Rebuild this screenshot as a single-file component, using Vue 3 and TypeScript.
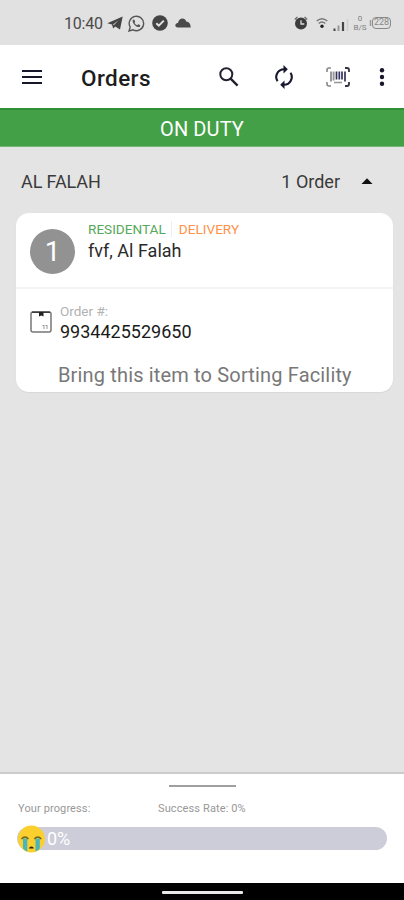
<script setup lang="ts">
interface Order {
  position: number
  kind: string
  task: string
  place: string
  code: string
  note: string
}

const orders: Order[] = [
  {
    position: 1,
    kind: 'RESIDENTAL',
    task: 'DELIVERY',
    place: 'fvf, Al Falah',
    code: '9934425529650',
    note: 'Bring this item to Sorting Facility',
  },
]
</script>

<template>
  <div class="screen">
    <div class="status">
      <span class="clock">10:40</span>
      <svg class="tele" width="16" height="14" viewBox="0 0 16 14">
        <path d="M0.3 7.2 15.7 0.4 13 13.6 8.3 10.4 6.2 12.6 5 8.6Z" fill="#444" />
        <path d="M5.8 8.400 11.500 4.300 7 9.300" fill="#bbb" />
      </svg>
      <svg class="whats" width="17" height="17" viewBox="0 0 17 17">
        <path d="M1 16 2.2 12.1A7.2 7.2 0 1 1 5 14.8Z" fill="none" stroke="#555" stroke-width="1.4" />
        <path d="M5.2 4.5c-1.5 1.5.2 4.300 2 5.900s4 2.300 5.100.8l-.3-1.200-1.900-.7-.9 1c-1.300-.5-2.200-1.500-2.700-2.500l.7-.9-.7-2Z" fill="#555" />
      </svg>
      <svg class="check" width="16" height="16" viewBox="0 0 16 16">
        <circle cx="8" cy="8" r="7.8" fill="#444" />
        <path d="m4.300 8.200 2.500 2.400 5-5" fill="none" stroke="#e2e2e2" stroke-width="2" />
      </svg>
      <svg class="cloud" width="16" height="10" viewBox="0 0 16 10">
        <path d="M3 9.500C.8 9.500 0 8 .4 6.800.8 5.500 2 5 3 5 3.500 2 5.300.5 7.400.5c2.200 0 3.500 1.300 4 3.300 2.300 0 4.100 1.500 4.300 5.700Z" fill="#4a4a4a" />
      </svg>
      <div class="system">
        <svg width="14" height="14" viewBox="0 0 14 14">
          <circle cx="7" cy="7.500" r="6" fill="#3d3d3d" />
          <path d="M.8 3.500 3.500.9M13.200 3.500 10.500.9" stroke="#666" stroke-width="1.300" />
          <path d="M7 4.200V8h3.300" fill="none" stroke="#ddd" stroke-width="1.300" />
        </svg>
        <svg class="wifi" width="12" height="12" viewBox="0 0 12 12">
          <path d="M.7 4.100Q6-.6 11.300 4.100M2.700 6.500Q6 3.500 9.300 6.500" fill="none" stroke="#777" stroke-width="1.400" />
          <circle cx="6" cy="9.300" r="1.700" fill="#222" />
        </svg>
        <svg class="signal" width="16" height="12" viewBox="0 0 16 12">
          <path d="M1.500 9.500V12" stroke="#444" stroke-width="2" />
          <path d="M5.500 6.500V12" stroke="#999" stroke-width="2" />
          <path d="M10 3v9" stroke="#444" stroke-width="2.200" />
          <path d="M14.500 0v12" stroke="#cdcdcd" stroke-width="1.500" />
        </svg>
        <span class="rate"><span>0</span><span>B/S</span></span>
        <svg class="nub" width="3" height="6" viewBox="0 0 3 6"><path d="M1.500 0v6" stroke="#999" stroke-width="1.500" /></svg>
        <span class="battery">228</span>
      </div>
    </div>

    <header class="bar">
      <svg class="menu" width="20" height="14" viewBox="0 0 20 14">
        <path d="M0 1h20M0 7h20M0 13h20" stroke="#17172b" stroke-width="2" />
      </svg>
      <h1>Orders</h1>
      <svg class="search" width="20" height="20" viewBox="0 0 20 20" fill="none" stroke="#222230">
        <circle cx="7.300" cy="7.300" r="6" stroke-width="2" />
        <path d="m11.600 11.600 7 7" stroke-width="2.400" />
      </svg>
      <svg class="sync" width="20" height="24" viewBox="0 0 20 24">
        <path d="M10.500 4.200H10a7.800 7.800 0 0 0-6.500 12M9.500 19.800H10a7.800 7.800 0 0 0 6.500-12" fill="none" stroke="#17172f" stroke-width="2.100" />
        <path d="M9.500 0v8.400l4.300-4.200ZM10.500 24v-8.400l-4.300 4.200Z" fill="#17172f" />
      </svg>
      <svg class="scan" width="24" height="20" viewBox="0 0 24 20" fill="none">
        <path d="M5 1H3Q1 1 1 3v2M1 15v2q0 2 2 2h2" stroke="#888" stroke-width="1.600" />
        <path d="M19 1h2q2 0 2 2v2M23 15v2q0 2-2 2h-2" stroke="#333345" stroke-width="1.800" />
        <path d="M5 4.500v10M7.600 4.500v9" stroke="#999" stroke-width="2" />
        <path d="M10.500 4.500v8M13.300 4.500v8M16 4.500v8M19 4.500v10" stroke="#33335b" stroke-width="1.700" />
        <path d="M8 15.500h8" stroke="#999" stroke-width="1.600" />
      </svg>
      <svg class="more" width="6" height="20" viewBox="0 0 6 20" fill="#17172b">
        <circle cx="3" cy="3.300" r="2.200" /><circle cx="3" cy="10" r="2.200" /><circle cx="3" cy="16.700" r="2.200" />
      </svg>
    </header>

    <div class="duty"><span>ON DUTY</span></div>

    <main>
      <div class="group">
        <span class="area">AL FALAH</span>
        <span class="count">1 Order</span>
        <svg width="12" height="6" viewBox="0 0 12 6"><path d="M.5 6 6 .2 11.500 6Z" fill="#111" /></svg>
      </div>

      <article v-for="order in orders" :key="order.code" class="card">
        <div class="top">
          <span class="badge">{{ order.position }}</span>
          <div class="info">
            <div class="tags">
              <span class="kind">{{ order.kind }}</span>
              <span class="task">{{ order.task }}</span>
            </div>
            <div class="place">{{ order.place }}</div>
          </div>
        </div>
        <div class="detail">
          <svg width="22" height="22" viewBox="0 0 22 22">
            <rect x="1" y="1" width="20" height="20" rx="2" fill="none" stroke="#777" stroke-width="1.500" />
            <path d="M2 1.200h18" stroke="#333" stroke-width="1.400" />
            <path d="M9 1h4.500v4.500L11.300 4.500 9 5.500Z" fill="#222" />
            <path d="M14 14v4M17 14v4M12.500 14.500h1.500M15.500 14.500h1.500" stroke="#999" stroke-width="1" />
          </svg>
          <div>
            <div class="label">Order #:</div>
            <div class="code">{{ order.code }}</div>
          </div>
        </div>
        <p class="note">{{ order.note }}</p>
      </article>
    </main>

    <section class="sheet">
      <div class="handle"></div>
      <div class="stats">
        <span class="your">Your progress:</span>
        <span class="success">Success Rate: 0%</span>
      </div>
      <div class="progress">
        <svg width="28" height="28" viewBox="0 0 28 28">
          <circle cx="14.400" cy="14" r="13.500" fill="#fbd02e" />
          <path d="M6 13.500h4.300v13Q7.500 25.500 6 23.500ZM18.500 13.500h4.300v10Q21 25.500 18.500 26.500Z" fill="#48b6bd" />
          <path d="M4.500 14q3.500-4 7 0M17.300 14q3.500-4 7 0" fill="none" stroke="#6e651f" stroke-width="1.500" />
          <path d="M12 23.500q.2-2 2.400-2t2.400 2Z" fill="#33230b" />
        </svg>
        <span>0%</span>
      </div>
    </section>
    <div class="nav"><div></div></div>
  </div>
</template>

<style>
body { background: #e4e4e4; }
</style>

<style scoped>
.screen {
  width: 404px;
  height: 900px;
  display: flex;
  flex-direction: column;
  overflow: hidden;
  background: #e4e4e4;
  font-family: Roboto, "Liberation Sans", sans-serif;
  color: #222;
  white-space: nowrap;
}
.screen * { box-sizing: border-box; }
svg { display: block; flex: none; }
.status {
  height: 45px;
  flex: none;
  display: flex;
  align-items: center;
  padding: 1px 13px 0 64px;
  background: #e1e1e1;
}
.clock { width: 43px; font-size: 16px; letter-spacing: -0.2px; color: #4a4a4a; }
.whats { margin-left: 5px; }
.check { margin-left: 7px; }
.cloud { margin-left: 7px; }
.system { margin-left: auto; display: flex; align-items: center; }
.wifi { margin-left: 8px; }
.signal { margin-left: 5px; margin-top: 3px; }
.rate {
  width: 14px;
  margin-left: 4px;
  display: flex;
  flex-direction: column;
  align-items: center;
  font-size: 8px;
  line-height: 9px;
  color: #808080;
}
.nub { margin-left: 2px; }
.battery {
  width: 19px;
  height: 12px;
  border: 1.500px solid #888;
  border-radius: 4px;
  font-size: 9px;
  line-height: 9.500px;
  text-align: center;
  color: #888;
}
.bar {
  height: 63px;
  flex: none;
  display: flex;
  align-items: center;
  padding: 0 19px 0 22px;
  background: #fff;
}
h1 { width: 137px; margin: 3px 0 0 39px; font-size: 22.500px; font-weight: 500; line-height: 26px; letter-spacing: 0.4px; color: #1d1d1d; }
.search { margin-left: 1px; }
.sync { margin-left: 35px; }
.scan { margin-left: 32px; }
.more { margin-left: auto; }
.duty {
  height: 39px;
  flex: none;
  display: flex;
  align-items: center;
  justify-content: center;
  padding-top: 2px;
  background: #43a047;
  border-top: 2px solid #2f9137;
  border-bottom: 1px solid #72b678;
  color: #fff;
  font-size: 20px;
  letter-spacing: 0.1px;
}
main { flex: 1; padding: 0 11px 0 16px; }
.group { height: 66px; display: flex; align-items: center; padding: 2px 20px 0 5px; font-size: 18px; color: #3a3a3a; }
.area { letter-spacing: -0.1px; }
.count { margin-left: auto; margin-right: 21px; }
.card {
  height: 179px;
  background: #fff;
  border-radius: 13px;
  box-shadow: 0 1px 1px #d8d8d8;
}
.top { height: 76px; display: flex; padding: 8px 14px 0; border-bottom: 2px solid #f4f4f4; }
.badge {
  width: 45px;
  height: 45px;
  margin-top: 8px;
  border-radius: 50%;
  background: #929292;
  color: #fff;
  font-size: 28px;
  line-height: 46px;
  text-align: center;
}
.info { margin-left: 13px; }
.tags { display: flex; align-items: center; height: 16px; font-size: 13.600px; }
.kind { color: #56a95a; }
.task { margin-left: 5px; padding-left: 7px; border-left: 1px solid #eee; color: #ff9248; }
.place { margin-top: 3px; font-size: 18px; line-height: 22px; color: #2a2a2a; }
.detail { height: 55px; display: flex; padding: 14px 14px 0 14px; }
.detail svg { margin-top: 8px; }
.detail > div { margin-left: 8px; }
.label { font-size: 13.500px; line-height: 16px; color: #b2b2b2; }
.code { margin-top: 2px; font-size: 18px; line-height: 22px; color: #1a1a1a; }
.note { margin: 19px 0 0 42px; font-size: 20px; line-height: 24px; letter-spacing: 0.160px; color: #787878; }
.sheet { height: 111px; flex: none; padding: 11px 17px 0; background: #fff; border-top: 2px solid #ccc; }
.handle { width: 67px; height: 2px; margin: 0 auto; background: #a0a0a0; }
.stats { display: flex; margin-top: 14px; font-size: 11px; line-height: 16px; letter-spacing: 0.120px; color: #989898; padding-left: 1px; }
.your { width: 140px; }
.progress {
  height: 23px;
  margin-top: 10px;
  display: flex;
  align-items: center;
  border-radius: 12px;
  background: #cdcdda;
  color: #fff;
  font-size: 18px;
}
.progress span { margin-left: 2px; }
.nav { height: 17px; flex: none; background: #000; padding-top: 8px; }
.nav div { width: 81px; height: 3px; margin: 0 auto; border-radius: 1px; background: #e8e8e8; }
</style>
